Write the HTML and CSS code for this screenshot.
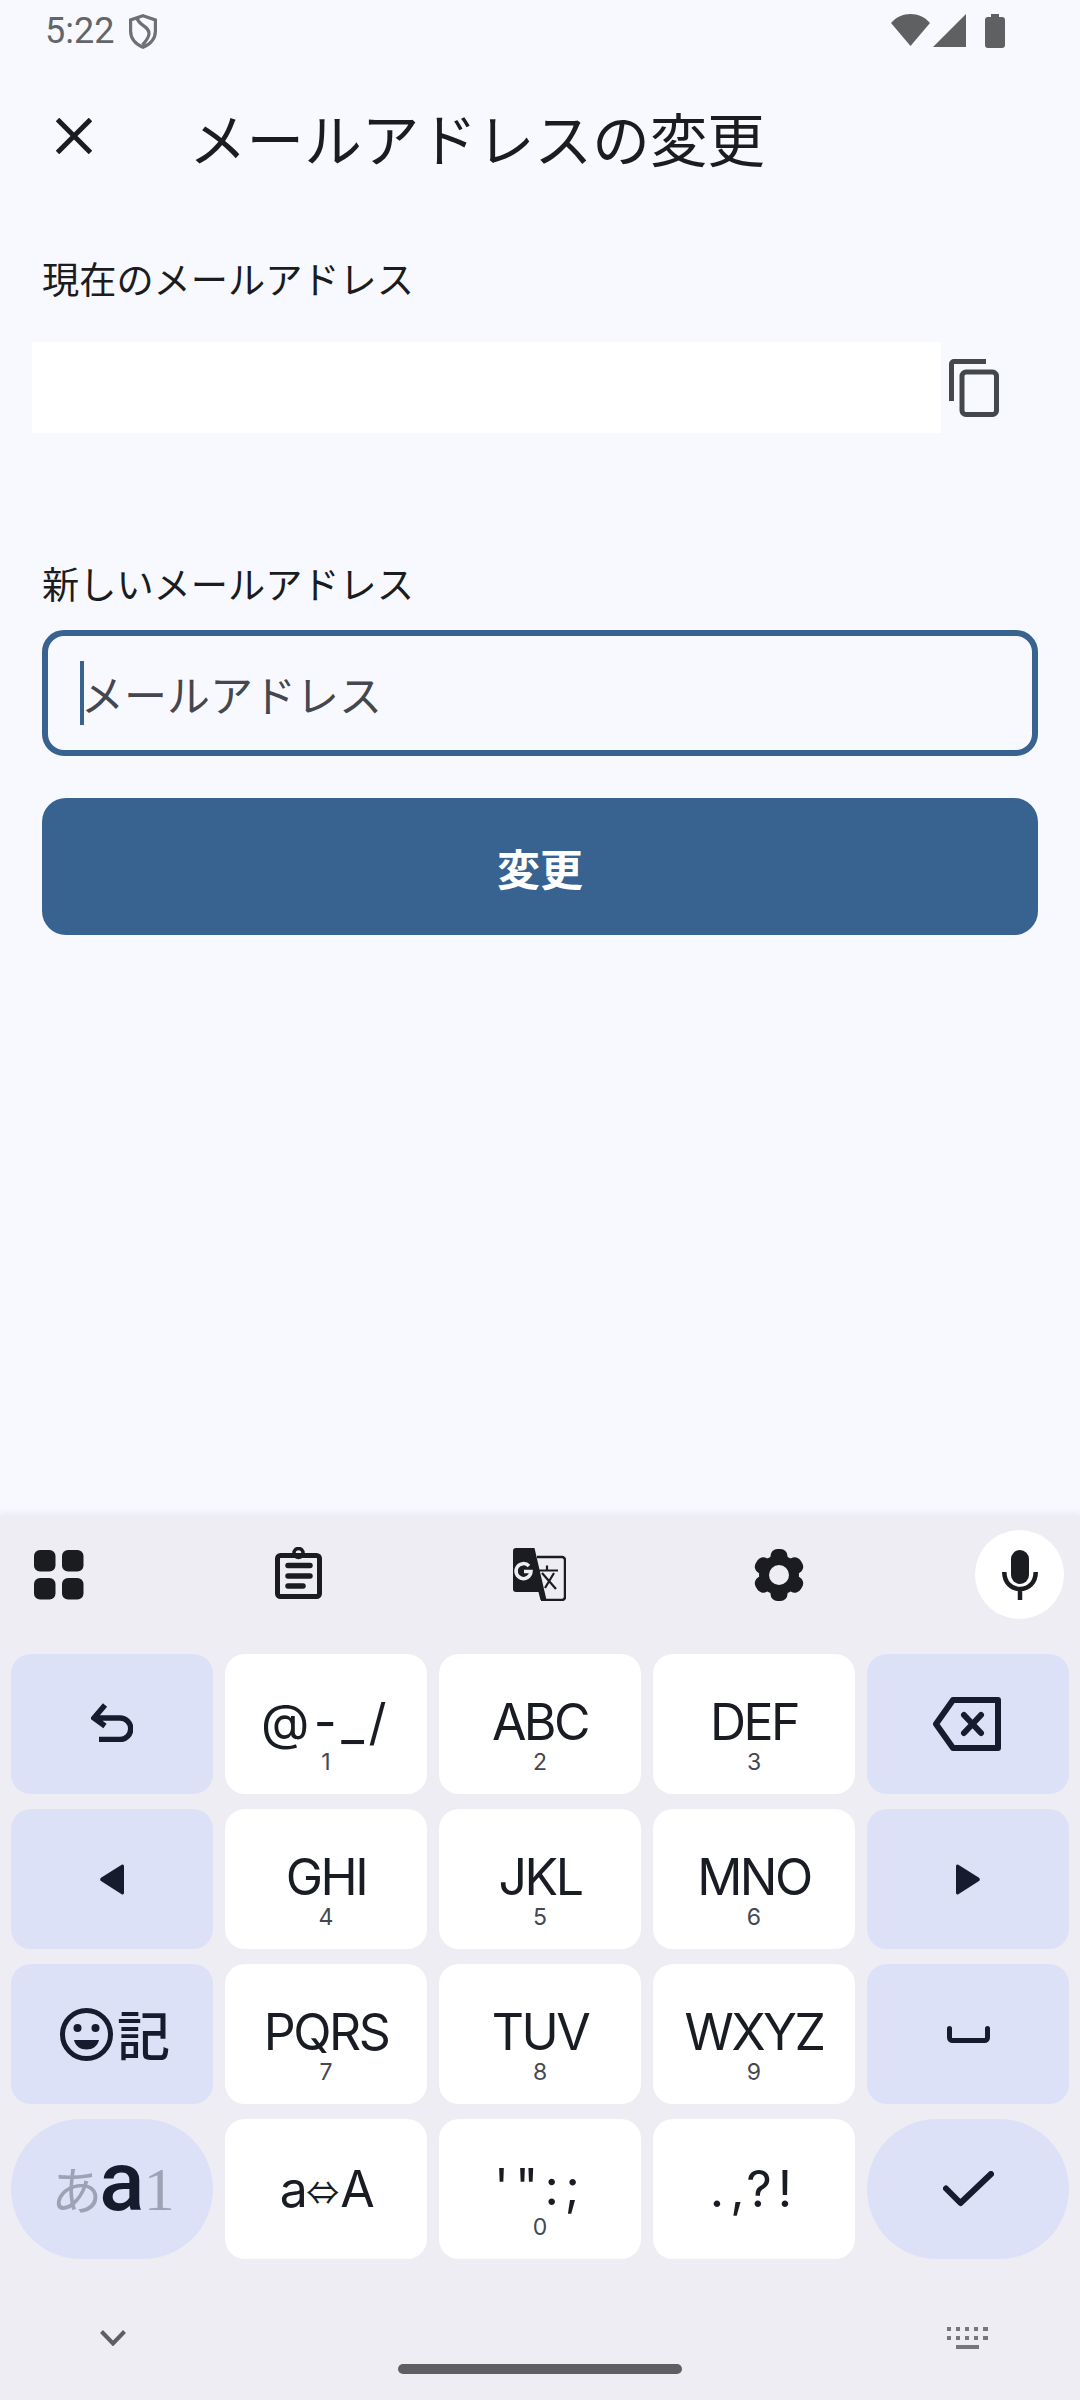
FILE: index.html
```html
<!DOCTYPE html>
<html lang="ja">
<head>
<meta charset="utf-8">
<title>メールアドレスの変更</title>
<link rel="stylesheet" href="styles.css">
</head>
<body>
<div class="screen">
  <div class="status">
    <div class="status-left">
      <span class="clock">5:22</span>
      <svg width="28" height="35" viewBox="0 0 28 35" fill="none" stroke="#6f7073" stroke-width="3.2"><path d="M14 1.8 26.4 6v11c0 8-6 13.5-12.4 16.2C7.6 30.5 1.6 25 1.6 17V6z"/><path d="M8 4c2 8 12.500 8 12 16-.3 4-4 8-6.500 11"/></svg>
    </div>
    <div class="status-right">
      <svg width="39" height="32" viewBox="0 0 39 32" fill="#5f6062"><path d="M0 9C10-3 29-3 39 9L19.500 32z"/></svg>
      <svg width="33" height="33" viewBox="0 0 33 33" fill="#5f6062"><path d="M0 33 33 0v33z"/></svg>
      <svg class="battery" width="20" height="34" viewBox="0 0 20 34" fill="#5f6062"><path d="M6 0h8v3h3a3 3 0 0 1 3 3v25a3 3 0 0 1-3 3H3a3 3 0 0 1-3-3V6a3 3 0 0 1 3-3h3z"/></svg>
    </div>
  </div>

  <header class="appbar">
    <svg class="close" width="36" height="36" viewBox="0 0 36 36" stroke="#1a1c20" stroke-width="5"><path d="M1.500 1.500 34.500 34.500M34.500 1.500 1.500 34.500"/></svg>
    <h1 class="title">メールアドレスの変更</h1>
  </header>

  <main class="form">
    <div class="label first">現在のメールアドレス</div>
    <div class="current-row">
      <div class="current-field"></div>
      <svg class="copy" width="50" height="58" viewBox="0 0 50 58" fill="none" stroke="#44484c" stroke-width="5"><path d="M2.500 42V5a2.500 2.500 0 0 1 2.500-2.500h32"/><rect x="13" y="13" width="34.500" height="42.500" rx="4"/></svg>
    </div>
    <div class="label second">新しいメールアドレス</div>
    <div class="input"><span class="caret"></span><span class="placeholder">メールアドレス</span></div>
    <div class="button">変更</div>
  </main>

  <section class="ime">
    <div class="toolbar">
      <div class="tool">
        <svg width="50" height="50" viewBox="0 0 50 50" fill="#1a1c20"><rect width="21.500" height="21.500" rx="6"/><rect x="28" width="21.500" height="21.500" rx="6"/><rect y="28" width="21.500" height="21.500" rx="6"/><rect x="28" y="28" width="21.500" height="21.500" rx="6"/></svg>
      </div>
      <div class="tool">
        <svg class="clip" width="47" height="52" viewBox="0 0 47 52" fill="none" stroke="#1a1c20" stroke-width="5"><rect x="2.500" y="8.500" width="42" height="41" rx="3"/><circle cx="23.500" cy="6" r="4.500" stroke-width="3.500"/><path stroke-linecap="round" stroke-width="5.500" d="M13 18.500h22M13 29h22M13 39h15"/></svg>
      </div>
      <div class="tool">
        <svg width="53" height="53" viewBox="0 0 53 53" fill="none"><path fill="#1a1c20" d="M3 0h18.500l12 52h-6l-2-8H3a3 3 0 0 1-3-3V3a3 3 0 0 1 3-3z"/><path stroke="#1a1c20" stroke-width="2.500" d="M24 9h25a3 3 0 0 1 3 3v37a3 3 0 0 1-3 3H28"/><path stroke="#eeedf3" stroke-width="3.500" d="M16 18a7.500 7.500 0 1 0 2 5.500h-7"/><path stroke="#1a1c20" stroke-width="2.200" d="M26 22.500h19M34 17.500v5M29 25l14 16M41 25l-9 15"/></svg>
      </div>
      <div class="tool">
        <svg width="52" height="52" viewBox="0 0 52 52"><g fill="#1a1c20"><circle cx="26" cy="26" r="20"/><rect x="17.500" width="17" height="52" rx="7"/><rect x="17.500" width="17" height="52" rx="7" transform="rotate(60 26 26)"/><rect x="17.500" width="17" height="52" rx="7" transform="rotate(120 26 26)"/></g><circle cx="26" cy="26" r="10" fill="#eeedf3"/></svg>
      </div>
      <div class="tool mic">
        <svg width="36" height="50" viewBox="0 0 36 50" fill="none" stroke="#1a1c20" stroke-width="4.500"><rect x="9" width="18" height="34" rx="9" fill="#1a1c20" stroke="none"/><path d="M2.300 22c0 10 6.500 17 15.700 17s15.700-7 15.700-17M18 38v12"/></svg>
      </div>
    </div>

    <div class="keys">
      <div class="key func">
        <svg class="undo" width="42" height="39" viewBox="0 0 42 39" fill="none" stroke="#161b2e" stroke-width="5.500"><path d="M14 2 3 15l11 8M3 15h26a10.500 10.500 0 0 1 0 21.500H8"/></svg>
      </div>
      <div class="key"><span class="main sym1">@-_/</span><span class="digit">1</span></div>
      <div class="key"><span class="main">ABC</span><span class="digit">2</span></div>
      <div class="key"><span class="main">DEF</span><span class="digit">3</span></div>
      <div class="key func">
        <svg class="backspace" width="68" height="54" viewBox="0 0 68 54" fill="none" stroke="#161b2e" stroke-width="6" stroke-linejoin="round"><path d="M20 3h45v48H20L3 27z"/><path stroke-linecap="round" d="M31 18 48 36M48 18 31 36"/></svg>
      </div>

      <div class="key func">
        <svg width="24" height="31" viewBox="0 0 24 31" fill="#161b2e"><path d="M24 2v27a1.500 1.500 0 0 1-2.300 1.300L1 17a2 2 0 0 1 0-3.200L21.700.7A1.500 1.500 0 0 1 24 2z"/></svg>
      </div>
      <div class="key"><span class="main">GHI</span><span class="digit">4</span></div>
      <div class="key"><span class="main">JKL</span><span class="digit">5</span></div>
      <div class="key"><span class="main">MNO</span><span class="digit">6</span></div>
      <div class="key func">
        <svg width="24" height="31" viewBox="0 0 24 31" fill="#161b2e"><path d="M0 2v27a1.500 1.500 0 0 0 2.300 1.300L23 17a2 2 0 0 0 0-3.200L2.300.7A1.500 1.500 0 0 0 0 2z"/></svg>
      </div>

      <div class="key func emoji-key">
        <svg width="53" height="53" viewBox="0 0 53 53"><circle cx="26.500" cy="26.500" r="24" fill="none" stroke="#161b2e" stroke-width="5"/><circle cx="17.500" cy="20" r="4" fill="#161b2e"/><circle cx="35.500" cy="20" r="4" fill="#161b2e"/><path fill="#161b2e" d="M14 32h25c-1.500 6.500-6.500 9.500-12.500 9.500S15.500 38.500 14 32z"/></svg>
        <span class="ki">記</span>
      </div>
      <div class="key"><span class="main">PQRS</span><span class="digit">7</span></div>
      <div class="key"><span class="main">TUV</span><span class="digit">8</span></div>
      <div class="key"><span class="main">WXYZ</span><span class="digit">9</span></div>
      <div class="key func">
        <svg width="43" height="17" viewBox="0 0 43 17" fill="none" stroke="#161b2e" stroke-width="5" stroke-linecap="round"><path d="M2.500 2.500v9a3 3 0 0 0 3 3h32a3 3 0 0 0 3-3v-9"/></svg>
      </div>

      <div class="key func pill mode">
        <span class="mode-kana">あ</span><span class="mode-latin">a</span><span class="mode-num">1</span>
      </div>
      <div class="key low"><span class="main">a<span class="swap">⇔</span>A</span></div>
      <div class="key"><span class="main sym2">'":;</span><span class="digit">0</span></div>
      <div class="key low"><span class="main sym3">.,?!</span></div>
      <div class="key func pill">
        <svg width="51" height="36" viewBox="0 0 51 36" fill="none" stroke="#161b2e" stroke-width="6" stroke-linecap="round" stroke-linejoin="round"><path d="M3 17.500 17.500 32 48 3"/></svg>
      </div>
    </div>

    <div class="navrow">
      <svg width="26" height="16" viewBox="0 0 26 16" fill="none" stroke="#5f5f62" stroke-width="4"><path d="M1.500 1.500 13 13.500 24.500 1.500"/></svg>
      <svg width="41" height="22" viewBox="0 0 41 22" fill="#77767b"><path d="M0 0h4v4H0zM9 0h4v4H9zM18 0h4v4h-4zM27 0h4v4h-4zM36 0h5v4h-5zM0 9h4v4H0zM9 9h4v4H9zM18 9h4v4h-4zM27 9h4v4h-4zM36 9h5v4h-5zM9 18h23v4H9z"/></svg>
    </div>
    <div class="homebar"></div>
  </section>
</div>
</body>
</html>
```

FILE: styles.css
```css
* { box-sizing: border-box; }
html, body { margin: 0; padding: 0; }
body {
  width: 1080px;
  height: 2400px;
  overflow: hidden;
  background: #f8f9ff;
  font-family: "Noto Sans CJK JP", "Noto Sans", sans-serif;
  color: #1a1c20;
}
.screen { height: 2400px; display: flex; flex-direction: column; }

.status {
  height: 60px;
  flex: none;
  display: flex;
  justify-content: space-between;
  align-items: flex-start;
  padding: 14px 75px 0 45px;
}
.status-left { display: flex; align-items: center; gap: 15px; height: 35px; }
.clock { font: 36px/35px Roboto, sans-serif; color: #636669; }
.status-right { display: flex; align-items: flex-start; gap: 3px; }
.battery { margin-left: 16px; }

.appbar {
  height: 160px;
  flex: none;
  display: flex;
  align-items: center;
  padding-left: 56px;
}
.close { margin-top: -8px; }
.title {
  margin: -6px 0 0 97px;
  font-size: 57.600px;
  line-height: 80px;
  font-weight: 400;
  color: #1a1c20;
}

.form { flex: 1; padding: 0 42px; display: flex; flex-direction: column; }
.label { font-size: 37.200px; line-height: 50px; height: 50px; color: #1a1c20; }
.label.first { margin-top: 33px; }
.label.second { margin-top: 125px; }
.current-row { display: flex; align-items: center; gap: 8px; margin: 39px 0 0 -10px; height: 91px; }
.current-field { width: 909px; height: 91px; background: #fff; }
.copy { flex: none; }
.input {
  margin-top: 22px;
  height: 126px;
  border: 6px solid #38628f;
  border-radius: 22px;
  display: flex;
  align-items: center;
  padding-left: 32px;
}
.caret { width: 4px; height: 64px; background: #38628f; flex: none; }
.placeholder { font-size: 43px; line-height: 60px; margin-left: -3px; color: #44474e; }
.button {
  margin-top: 42px;
  height: 137px;
  background: #38628f;
  color: #fff;
  border-radius: 24px;
  font-size: 43px;
  font-weight: 700;
  display: flex;
  align-items: center;
  justify-content: center;
}

.ime { height: 885px; flex: none; background: #eeedf3; box-shadow: 0 -3px 5px rgba(90, 90, 110, .06); }
.toolbar {
  height: 139px;
  display: flex;
  justify-content: space-between;
  align-items: center;
  padding: 0 16px 20px 14px;
}
.tool { width: 89px; height: 89px; display: flex; align-items: center; justify-content: center; }
.mic { background: #fff; border-radius: 50%; }
.clip { margin-bottom: 4px; }

.keys {
  display: grid;
  grid-template-columns: repeat(5, 202px);
  grid-auto-rows: 140px;
  column-gap: 12px;
  row-gap: 15px;
  padding: 0 11px;
}
.key {
  background: #fff;
  border-radius: 20px;
  display: flex;
  flex-direction: column;
  align-items: center;
  padding-top: 43px;
  font-family: Inter, Roboto, sans-serif;
  color: #1a1c24;
}
.key.low { padding-top: 45px; }
.key.func {
  background: #dce1f7;
  padding-top: 0;
  justify-content: center;
}
.key.pill { border-radius: 70px; }
.main { font-size: 50px; font-weight: 400; line-height: 50px; letter-spacing: -2.500px; white-space: nowrap; }
.digit { font-size: 23px; font-weight: 400; line-height: 24px; margin-top: 3px; color: #44474f; }
.sym1 { letter-spacing: 4.500px; }
.sym2 { letter-spacing: 6px; }
.sym3 { letter-spacing: 6px; }
.swap { font-family: "Noto Sans CJK JP", sans-serif; font-size: 33px; letter-spacing: 0; margin: 0 1px; vertical-align: 2px; }

.undo { margin-bottom: 3px; }
.backspace { margin-right: 2px; }

.emoji-key { flex-direction: row; align-items: center; gap: 4px; padding-left: 6px; }
.ki { font-family: "Noto Sans CJK JP", sans-serif; font-size: 53px; line-height: 56px; font-weight: 500; color: #161b2e; margin-top: -3px; }

.mode { flex-direction: row; align-items: baseline; padding-left: 2px; line-height: 126px; }
.key.mode { justify-content: center; }
.mode-kana { font-family: "Noto Sans CJK JP", sans-serif; font-size: 51px; letter-spacing: -3px; color: #9ea2b5; }
.mode-latin { font-family: Roboto, sans-serif; font-weight: 500; font-size: 84px; line-height: 126px; color: #161b2e; }
.mode-num { font-family: "Liberation Serif", serif; font-size: 62px; margin-left: -1px; color: #9ea2b5; }

.navrow {
  display: flex;
  justify-content: space-between;
  align-items: center;
  height: 22px;
  margin-top: 68px;
  padding: 0 92px 0 100px;
}
.homebar {
  width: 284px;
  height: 10px;
  margin: 15px auto 0;
  border-radius: 5px;
  background: #5f5f62;
}
```
